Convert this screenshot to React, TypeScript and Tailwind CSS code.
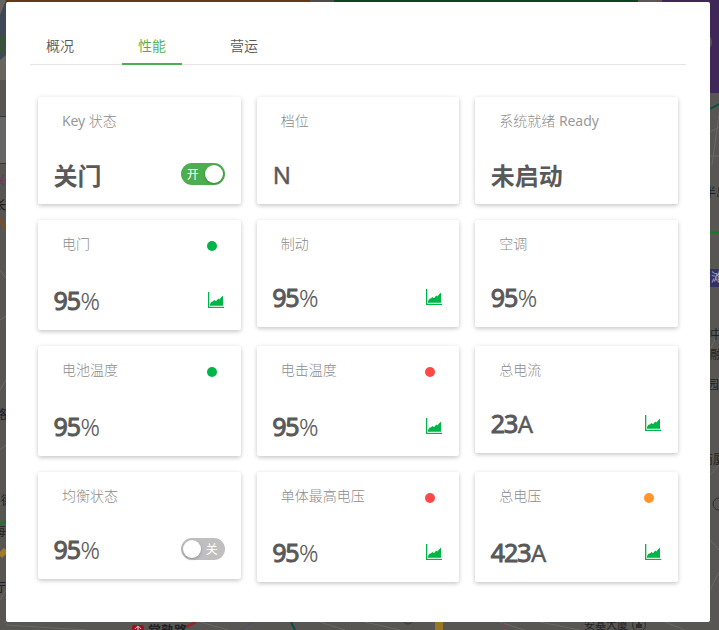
type Status = "green" | "red" | "orange";

interface Metric {
  title: string;
  latin?: string;
  latinFirst?: boolean;
  value: string;
  unit?: string;
  plain?: boolean;
  status?: Status;
  chart?: boolean;
  toggle?: boolean;
}

const metrics: Metric[] = [
  { title: "状态", latin: "Key", latinFirst: true, value: "关门", toggle: true },
  { title: "档位", value: "N", plain: true },
  { title: "系统就绪", latin: "Ready", value: "未启动" },
  { title: "电门", value: "95", unit: "%", status: "green", chart: true },
  { title: "制动", value: "95", unit: "%", chart: true },
  { title: "空调", value: "95", unit: "%" },
  { title: "电池温度", value: "95", unit: "%", status: "green" },
  { title: "电击温度", value: "95", unit: "%", status: "red", chart: true },
  { title: "总电流", value: "23", unit: "A", chart: true },
  { title: "均衡状态", value: "95", unit: "%", toggle: false },
  { title: "单体最高电压", value: "95", unit: "%", status: "red", chart: true },
  { title: "总电压", value: "423", unit: "A", status: "orange", chart: true },
];

const dotColor: Record<Status, string> = {
  green: "bg-[#00b548]",
  red: "bg-[#ff4949]",
  orange: "bg-[#ff962d]",
};

function AreaChartIcon() {
  return (
    <svg className="mb-px" width="17" height="16" viewBox="0 0 17 16" fill="#00b548">
      <rect x="0" y="0" width="1.3" height="16" />
      <rect x="0" y="14.8" width="16" height="1.2" />
      <path d="M2 13.800v-1.700l1.700-2.700h1.300l1.200-1.300 1 .7h1.300l1.700-2.200 1.100.8 1.700-1.800L15 3.400v10.400z" />
    </svg>
  );
}

function Switch({ on }: { on: boolean }) {
  return (
    <div
      className={`mb-0.5 flex h-[22px] w-11 items-center justify-between rounded-full px-0.5 text-xs text-white ${
        on ? "bg-[#4cae50]" : "flex-row-reverse bg-[#bfbfbf]"
      }`}
    >
      <span className={`pt-0.5 leading-none ${on ? "pl-1" : "pr-[5px]"}`}>{on ? "开" : "关"}</span>
      <span className="size-[18px] rounded-full bg-white shadow-[0_1px_3px_rgba(0,0,0,0.25)]" />
    </div>
  );
}

function MetricTitle({ metric }: { metric: Metric }) {
  const latin = metric.latin && <span className="font-normal tracking-[-0.1px] text-[#9a9a9a]">{metric.latin}</span>;
  return (
    <h3 className="text-sm leading-[48px] font-light whitespace-nowrap text-[#8c8c8c]">
      {metric.latinFirst ? (
        <>
          {latin} {metric.title}
        </>
      ) : (
        <>
          {metric.title} {latin}
        </>
      )}
    </h3>
  );
}

function MetricValue({ metric }: { metric: Metric }) {
  if (!metric.unit) {
    return (
      <p
        className={`text-2xl leading-[59px] whitespace-nowrap text-[#595959] ${
          metric.plain ? "[-webkit-text-stroke:0.4px_#595959]" : "-ml-[0.5px] pt-0.5 font-bold"
        }`}
      >
        {metric.value}
      </p>
    );
  }
  return (
    <p className="-ml-[0.5px] flex items-baseline text-2xl leading-[59px] whitespace-nowrap text-[#595959]">
      <span className="text-[25px] tracking-[-1.1px] [-webkit-text-stroke:1px_#595959]">{metric.value}</span>
      <span
        className={
          metric.unit === "%"
            ? "ml-[0.5px] font-light [-webkit-text-stroke:0.15px_#595959]"
            : "ml-[0.5px] [-webkit-text-stroke:0.4px_#595959]"
        }
      >
        {metric.unit}
      </span>
    </p>
  );
}

function MetricCard({ metric }: { metric: Metric }) {
  return (
    <article className="rounded-[2px] bg-white shadow-[0_1px_5px_rgba(0,0,0,0.12),0_2px_4px_rgba(0,0,0,0.12)]">
      <header className={`flex items-start justify-between px-6 ${metric.status ? "h-[51px]" : "h-12"}`}>
        <MetricTitle metric={metric} />
        {metric.status && <span className={`mt-[21px] size-2.5 rounded-full ${dotColor[metric.status]}`} />}
      </header>
      <div className="flex h-[59px] items-center justify-between px-4">
        <MetricValue metric={metric} />
        {metric.chart && <AreaChartIcon />}
        {metric.toggle !== undefined && <Switch on={metric.toggle} />}
      </div>
    </article>
  );
}

function MapBackdrop() {
  return (
    <svg className="absolute inset-0" width="719" height="630" fill="none" aria-hidden="true">
      <rect width="719" height="630" fill="#575652" />
      <rect width="6" height="60" fill="#3f4858" />
      <path d="M0 15L6 0H0zM0 60l6-5v25H0z" fill="#66665f" />
      <path d="M0 35h6v18H0z" fill="#39523a" />
      <rect y="117" width="6" height="46" fill="#666" />
      <path d="M0 116.500h6M0 163.500h6" stroke="#373737" />
      <path d="M0 219l6 11" stroke="#8d4a16" strokeWidth="2" />
      <path d="M0 270l6 8M0 320l6-4M0 390l6-10M0 450l6-5M0 505l6-8M0 600l6-10" stroke="#6a6965" />
      <path d="M0 524l6-3" stroke="#147a24" strokeWidth="2" />
      <path d="M0 556l6-6" stroke="#a4792b" strokeWidth="6" />
      <rect x="6" width="304" height="4" fill="#63371a" />
      <rect x="310" width="24" height="4" fill="#504b4b" />
      <rect x="334" width="304" height="4" fill="#0b4420" />
      <rect x="638" width="24" height="4" fill="#5b5655" />
      <rect x="662" width="57" height="93" fill="#3f2858" />
      <circle cx="702" cy="42" r="10" fill="#5a5360" />
      <path d="M710 109l9-5" stroke="#075047" strokeWidth="2" />
      <path d="M710 132l9-5M710 156h9M712 165l7-50M710 350l9-20M710 390l9-12M710 475l9-10M710 540l9 10M710 590l9-18" stroke="#6a6965" />
      <path d="M710 232.500h9" stroke="#147a24" strokeWidth="2" />
      <rect x="710" y="269" width="9" height="18" fill="#363063" />
      <path d="M6 625l80 5M200 622l28 8M320 622l25 8M365 622l35 8M500 622l24 8M540 622l40 8M665 622l20 8" stroke="#6a6965" />
      <path d="M240 630l13-8" stroke="#544a68" />
      <path d="M186 627l10-5" stroke="#9c2020" strokeWidth="2" />
      <path d="M291 622l4 8" stroke="#075047" strokeWidth="2" />
      <path d="M439 622v8" stroke="#9a7628" strokeWidth="8" />
      <path d="M503 622l3 8" stroke="#963863" />
      <rect x="132" y="625" width="12" height="10" rx="2" fill="#a00f22" />
      <path d="M135 629c2-3 4-3 6 0M138 626v4" stroke="#ddd" />
      <circle cx="408" cy="619" r="5" stroke="#333" />
      <circle cx="639" cy="625" r="6.500" stroke="#2d2d2d" />
      <path d="M636 628v-4h2v-3h2v3h2v4z" fill="#2d2d2d" />
      <circle cx="719" cy="504" r="6" stroke="#2d2d2d" />
      <g fill="#1f1f24" fontSize="12" fontFamily="'Noto Sans CJK SC', sans-serif">
        <text x="-6" y="210" fontWeight="500">长</text>
        <text x="-5" y="419">路</text>
        <text x="1" y="505">德</text>
        <text x="-6" y="536">每</text>
        <text x="-6" y="592">厅</text>
        <text x="-7" y="185" fill="#713265">兴</text>
        <text x="148" y="635" fontSize="13" fontWeight="700">常熟路</text>
        <text x="584" y="629" fontSize="11">安基大厦</text>
        <text x="704" y="197">半岛</text>
        <text x="711" y="282" fill="#aaa9bd">滩</text>
        <text x="710" y="339">中</text>
        <text x="710" y="359">融</text>
        <text x="707" y="389">园</text>
        <text x="701" y="464">商厦</text>
      </g>
    </svg>
  );
}

const tabs = ["概况", "性能", "营运"];

export default function App() {
  return (
    <div className="relative h-[630px] w-[719px] overflow-hidden pt-0.5 pl-1.5 [font-family:'Noto_Sans','Noto_Sans_CJK_SC',sans-serif]">
      <MapBackdrop />
      <main className="relative h-[620px] w-[704px] rounded-[2px] bg-white px-6 pt-[26px]">
        <nav className="flex h-[37px] gap-8 border-b border-[#e5e5e5]">
          {tabs.map((tab) => (
            <button
              key={tab}
              className={`h-[37px] w-15 border-b-2 text-center text-sm leading-8 font-[350] ${
                tab === "性能" ? "border-[#4cae50] text-[#4cae50]" : "border-transparent text-[#595959]"
              }`}
            >
              {tab}
            </button>
          ))}
        </nav>
        <section className="mt-8 ml-2 grid w-[640px] grid-cols-3 items-start gap-4">
          {metrics.map((metric) => (
            <MetricCard key={metric.title} metric={metric} />
          ))}
        </section>
      </main>
    </div>
  );
}
